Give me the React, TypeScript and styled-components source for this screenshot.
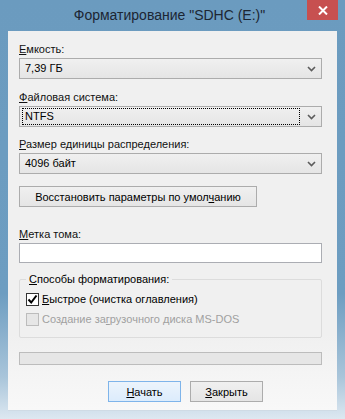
import styled, { createGlobalStyle } from 'styled-components';

const GlobalStyle = createGlobalStyle`
  html, body {
    margin: 0;
    padding: 0;
    background: #6b9bbf;
  }
  body {
    font-family: 'Liberation Sans', Arial, sans-serif;
    font-size: 11px;
    color: #000;
  }
`;

const Chevron = () => (
  <svg width="9" height="6" viewBox="0 0 9 6">
    <path d="M1 1 L4.5 4.5 L8 1" fill="none" stroke="#5c5c5c" strokeWidth="1.6" />
  </svg>
);

const Key = ({ children }: { children: string }) => <u>{children}</u>;

const App = () => {
  return (
    <>
      <GlobalStyle />
      <Frame>
        <TitleBar>
          <Title>Форматирование "SDHC (E:)"</Title>
          <CloseButton>
            <svg width="10" height="9" viewBox="0 0 10 9">
              <path d="M1 0.5 L9 8.5 M9 0.5 L1 8.5" stroke="#fff" strokeWidth="2" />
            </svg>
          </CloseButton>
        </TitleBar>
        <Client>
          <Label $top={11}>
            <Key>Е</Key>мкость:
          </Label>
          <Combo>
            <ComboText>7,39 ГБ</ComboText>
            <Chevron />
          </Combo>

          <Label $top={11}>
            <Key>Ф</Key>айловая система:
          </Label>
          <Combo>
            <ComboText $focused>NTFS</ComboText>
            <Chevron />
          </Combo>

          <Label $top={10}>
            <Key>Р</Key>азмер единицы распределения:
          </Label>
          <Combo>
            <ComboText>4096 байт</ComboText>
            <Chevron />
          </Combo>

          <RestoreButton>
            <span>
              Восстановить параметры по умол<Key>ч</Key>анию
            </span>
          </RestoreButton>

          <Label $top={20}>
            <Key>М</Key>етка тома:
          </Label>
          <TextBox />

          <Group>
            <Legend>
              <Key>С</Key>пособы форматирования:
            </Legend>
            <CheckRow>
              <CheckBox>
                <svg width="11" height="11" viewBox="0 0 11 11">
                  <path d="M1.5 5.5 L4.2 8.5 L9.5 1.5" fill="none" stroke="#000" strokeWidth="2" />
                </svg>
              </CheckBox>
              <span>
                <Key>Б</Key>ыстрое (очистка оглавления)
              </span>
            </CheckRow>
            <CheckRow $disabled>
              <CheckBox $disabled />
              <span>
                Создание за<Key>г</Key>рузочного диска MS-DOS
              </span>
            </CheckRow>
          </Group>

          <Progress />

          <ButtonRow>
            <DialogButton $default>
              <span>
                <Key>Н</Key>ачать
              </span>
            </DialogButton>
            <DialogButton>
              <span>
                <Key>З</Key>акрыть
              </span>
            </DialogButton>
          </ButtonRow>
        </Client>
      </Frame>
    </>
  );
};

const Frame = styled.div`
  width: 345px;
  height: 419px;
  box-sizing: border-box;
  padding: 0 8px 8px;
  display: flex;
  flex-direction: column;
  background: linear-gradient(
    to bottom,
    #6b9bbf 0%,
    #6d9dc1 70%,
    #a9c5da 90%,
    #dde8f1 100%
  );
`;

const TitleBar = styled.div`
  height: 31px;
  position: relative;
  display: flex;
  align-items: center;
  justify-content: center;
`;

const Title = styled.div`
  font-size: 14px;
  color: #1c2633;
  margin-top: -2px;
  margin-left: -6px;
`;

const CloseButton = styled.div`
  position: absolute;
  top: 0;
  right: -1px;
  width: 31px;
  height: 20px;
  background: #c75050;
  display: flex;
  align-items: center;
  justify-content: center;
`;

const Client = styled.div`
  flex: 1;
  background: linear-gradient(to bottom, #f0f0f0 0%, #f0f0f0 80%, #f8f8f8 100%);
  padding: 0 15px 0 11px;
  display: flex;
  flex-direction: column;
  border-bottom: 1px solid #cfdbe5;
`;

const Label = styled.div<{ $top: number }>`
  margin-top: ${(p) => p.$top}px;
  line-height: 15px;
  height: 15px;
  margin-bottom: 1px;
  color: #111;
`;

const Combo = styled.div`
  height: 21px;
  box-sizing: border-box;
  border: 1px solid #acacac;
  background: linear-gradient(to bottom, #f0f0f0, #e5e5e5);
  display: flex;
  align-items: center;
  padding: 0 5px 0 2px;
`;

const ComboText = styled.div<{ $focused?: boolean }>`
  flex: 1;
  height: 17px;
  line-height: 15px;
  padding-left: 2px;
  margin-right: 7px;
  box-sizing: border-box;
  border: 1px dotted ${(p) => (p.$focused ? '#000' : 'transparent')};
`;

const RestoreButton = styled.div`
  margin-top: 12px;
  width: 238px;
  height: 21px;
  box-sizing: border-box;
  border: 1px solid #acacac;
  background: linear-gradient(to bottom, #f0f0f0, #e5e5e5);
  display: flex;
  align-items: center;
  justify-content: center;
`;

const TextBox = styled.div`
  height: 20px;
  box-sizing: border-box;
  border: 1px solid #abadb3;
  background: #fff;
`;

const Group = styled.fieldset`
  margin: 9px 0 0;
  padding: 0 0 6px 6px;
  border: 1px solid #dcdcdc;
  border-radius: 2px;
  height: 66px;
  box-sizing: border-box;
`;

const Legend = styled.legend`
  padding: 0 3px 0 3px;
  margin-left: 0;
  line-height: 15px;
`;

const CheckRow = styled.div<{ $disabled?: boolean }>`
  display: flex;
  align-items: center;
  gap: 3px;
  height: 20px;
  margin-top: ${(p) => (p.$disabled ? '0' : '2px')};
  color: ${(p) => (p.$disabled ? '#a0a0a0' : '#000')};
`;

const CheckBox = styled.div<{ $disabled?: boolean }>`
  width: 13px;
  height: 13px;
  box-sizing: border-box;
  border: 1px solid ${(p) => (p.$disabled ? '#bcbcbc' : '#333')};
  background: ${(p) => (p.$disabled ? '#e6e6e6' : '#fff')};
  display: flex;
  align-items: center;
  justify-content: center;
`;

const Progress = styled.div`
  margin-top: 14px;
  height: 13px;
  box-sizing: border-box;
  border: 1px solid #bcbcbc;
  background: #e6e6e6;
`;

const ButtonRow = styled.div`
  margin-top: 16px;
  display: flex;
  gap: 9px;
  padding-left: 89px;
`;

const DialogButton = styled.div<{ $default?: boolean }>`
  width: 73px;
  height: 21px;
  box-sizing: border-box;
  border: 1px solid ${(p) => (p.$default ? '#7eb4ea' : '#acacac')};
  background: ${(p) =>
    p.$default
      ? 'linear-gradient(to bottom, #ecf4fc, #dcecfc)'
      : 'linear-gradient(to bottom, #f0f0f0, #e5e5e5)'};
  display: flex;
  align-items: center;
  justify-content: center;
`;

export default App;
